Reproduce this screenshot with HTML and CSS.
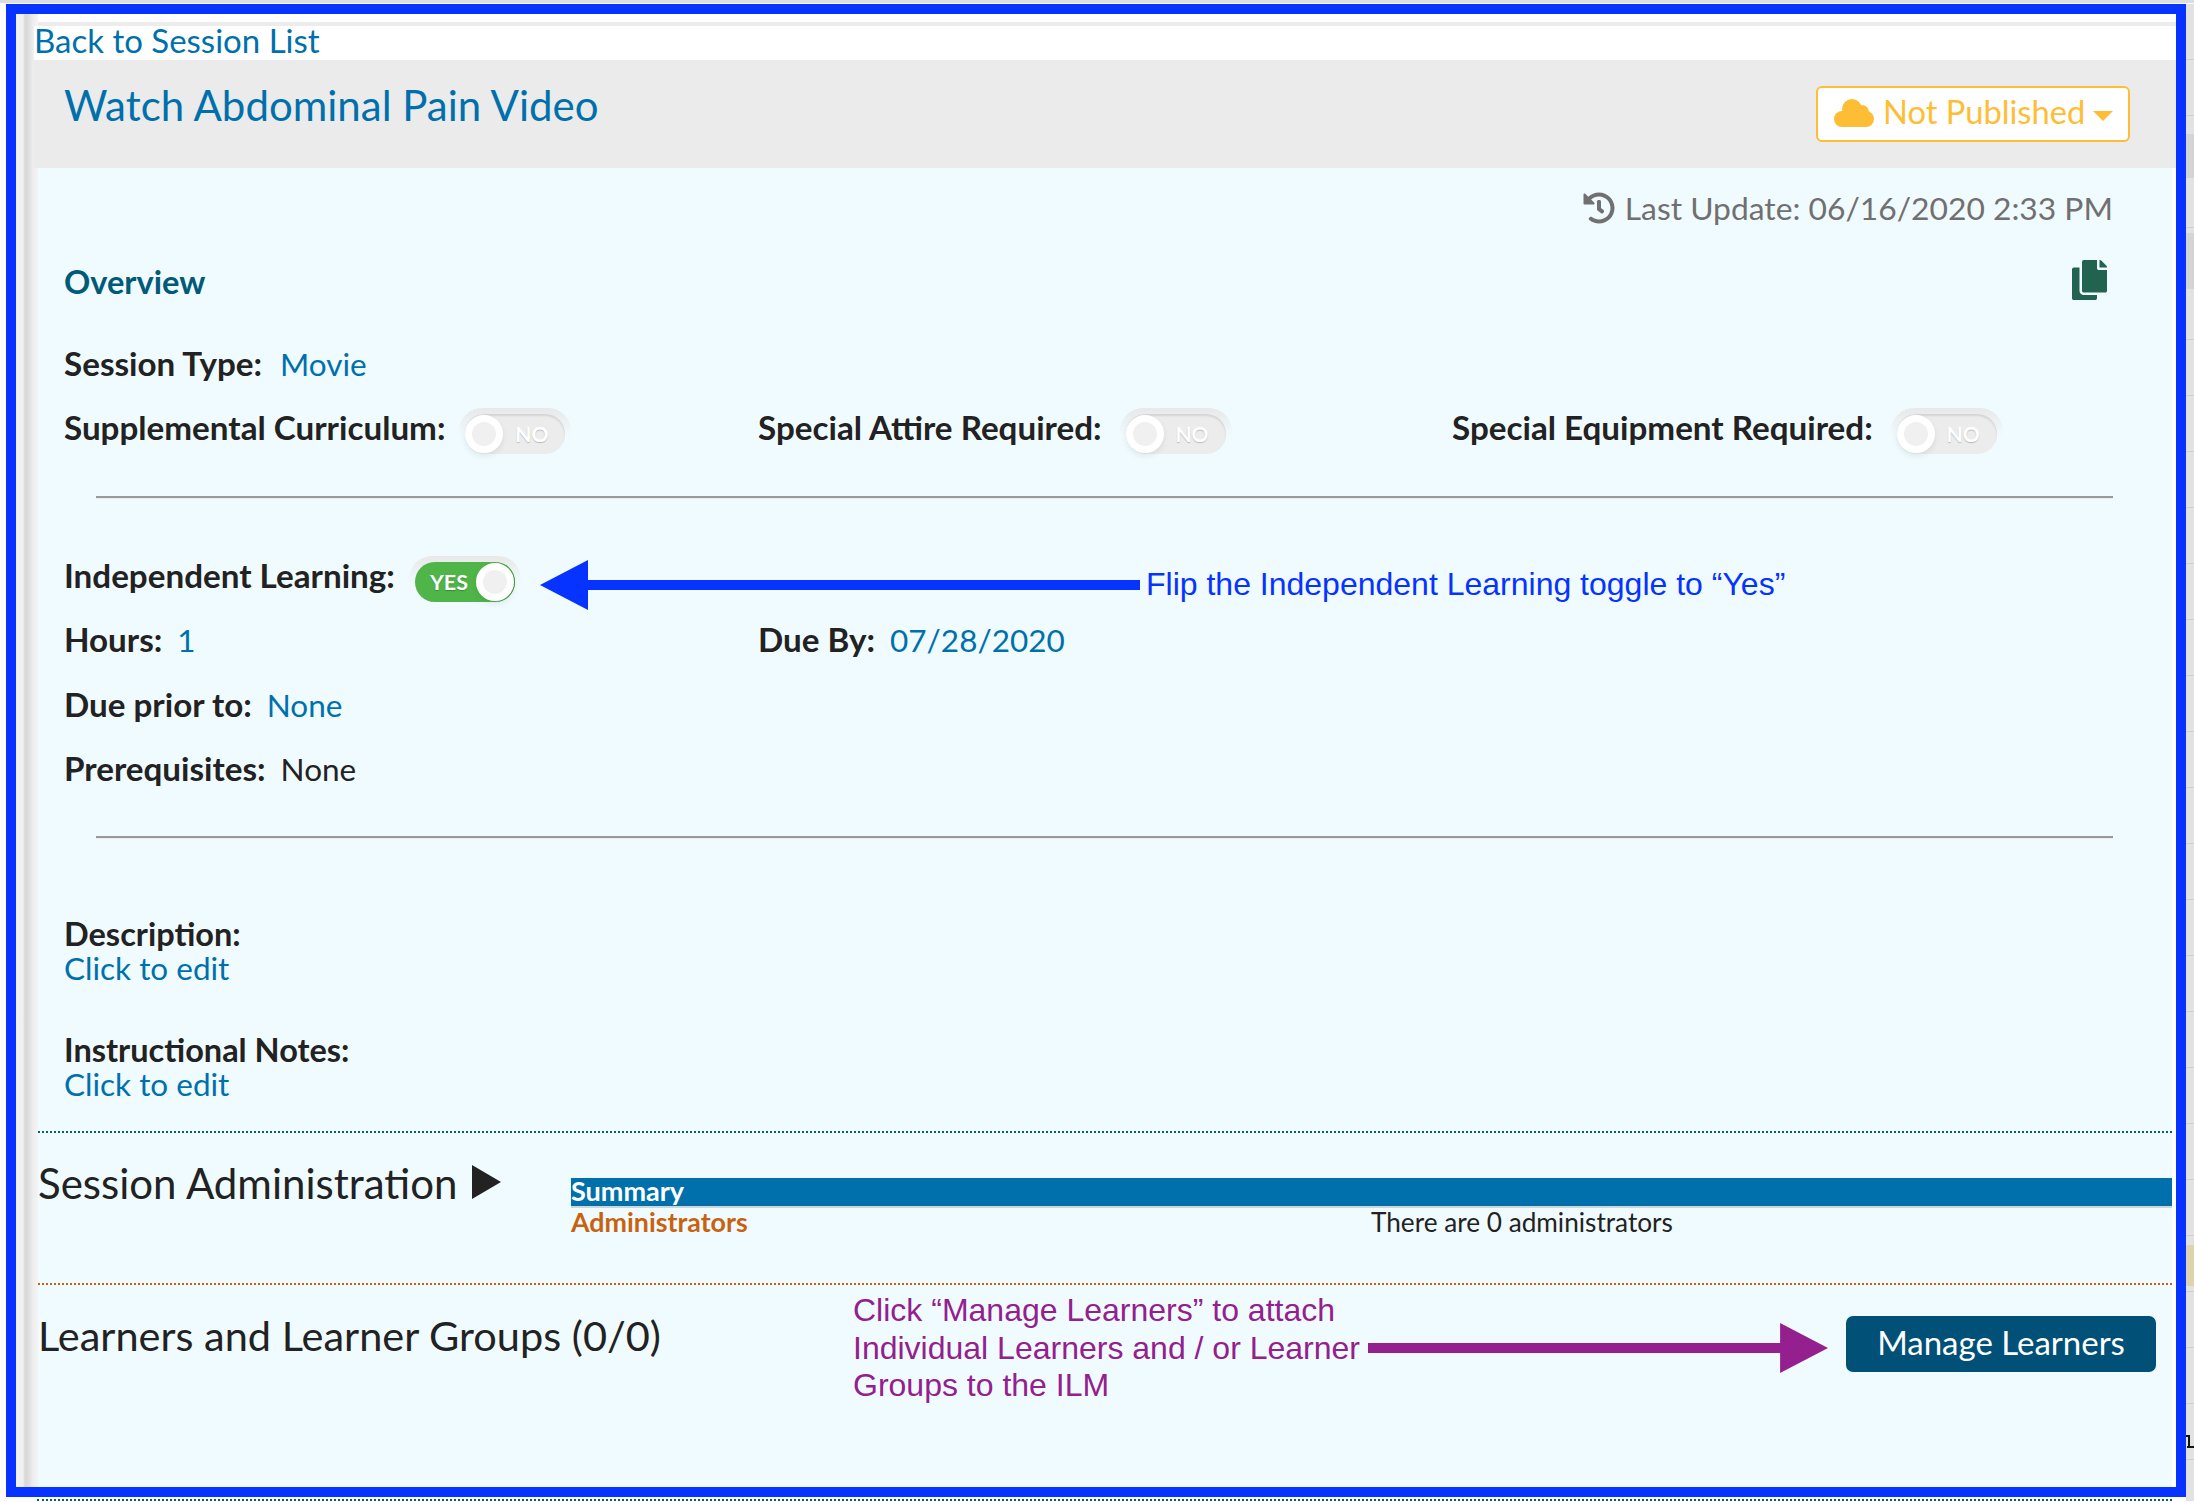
FILE: index.html
```html
<!DOCTYPE html>
<html lang="en">
<head>
<meta charset="UTF-8" />
<title>Watch Abdominal Pain Video</title>
<link rel="stylesheet" href="styles.css">
</head>
<body>
  <div class="frame">
    <div class="top-strip"></div>
    <div class="shell">
      <div class="back"><a href="#">Back to Session List</a></div>

      <div class="head">
        <h1>Watch Abdominal Pain Video</h1>
        <button class="publish">
          <svg class="cloud" viewBox="0 0 40 28"><circle cx="8" cy="20" r="8"/><circle cx="18" cy="10" r="10"/><circle cx="28" cy="13" r="7"/><circle cx="32" cy="20" r="8"/><rect x="8" y="14" width="24" height="14"/></svg>
          <span>Not Published</span>
          <i class="caret"></i>
        </button>
      </div>

      <div class="content">
        <div class="overview">
          <div class="update">
            <svg class="history" viewBox="0 0 512 512"><path d="M504 255.531c.253 136.64-111.18 248.372-247.82 248.468-59.015.042-113.223-20.53-155.822-54.911-11.077-8.94-11.905-25.541-1.839-35.607l11.267-11.267c8.609-8.609 22.353-9.551 31.891-1.984C173.062 425.135 212.781 440 256 440c101.705 0 184-82.311 184-184 0-101.705-82.311-184-184-184-48.814 0-93.149 18.969-126.068 49.932l50.754 50.754c10.08 10.08 2.941 27.314-11.313 27.314H24c-8.837 0-16-7.163-16-16V38.627c0-14.254 17.234-21.393 27.314-11.314l49.372 49.372C129.209 34.136 189.552 8 256 8c136.81 0 247.747 110.78 248 247.531zm-180.912 78.784l9.823-12.63c8.138-10.463 6.253-25.542-4.21-33.679L288 256.349V152c0-13.255-10.745-24-24-24h-16c-13.255 0-24 10.745-24 24v135.651l65.409 50.874c10.463 8.137 25.541 6.253 33.679-4.21z"/></svg>
            <span>Last Update: 06/16/2020 2:33 PM</span>
          </div>

          <div class="overview-title">
            <h2>Overview</h2>
            <svg class="copy" viewBox="0 0 448 512"><path d="M320 448v40c0 13.255-10.745 24-24 24H24c-13.255 0-24-10.745-24-24V120c0-13.255 10.745-24 24-24h72v296c0 30.879 25.121 56 56 56h168zm0-344V0H152c-13.255 0-24 10.745-24 24v368c0 13.255 10.745 24 24 24h272c13.255 0 24-10.745 24-24V128H344c-13.2 0-24-10.8-24-24zm120.971-31.029L375.029 7.029A24 24 0 0 0 358.059 0H352v96h96v-6.059a24 24 0 0 0-7.029-16.97z"/></svg>
          </div>

          <div class="row row-type"><b>Session Type:</b><a href="#">Movie</a></div>

          <div class="cols row-flags">
            <div class="row"><b>Supplemental Curriculum:</b>
              <div class="toggle toggle-near"><div class="track"><i class="knob"></i><em>NO</em></div></div>
            </div>
            <div class="row"><b>Special Attire Required:</b>
              <div class="toggle"><div class="track"><i class="knob"></i><em>NO</em></div></div>
            </div>
            <div class="row"><b>Special Equipment Required:</b>
              <div class="toggle"><div class="track"><i class="knob"></i><em>NO</em></div></div>
            </div>
          </div>

          <hr class="rule rule-a">

          <div class="row row-ind"><b>Independent Learning:</b>
            <div class="toggle toggle-near"><div class="track on"><em>YES</em><i class="knob"></i></div></div>
          </div>

          <div class="cols row-hours">
            <div class="row"><b>Hours:</b><a href="#">1</a></div>
            <div class="row"><b>Due By:</b><a href="#">07/28/2020</a></div>
          </div>

          <div class="row row-prior"><b>Due prior to:</b><a href="#">None</a></div>
          <div class="row row-pre"><b>Prerequisites:</b><span>None</span></div>

          <hr class="rule rule-b">

          <div class="stack stack-desc"><b>Description:</b><a href="#">Click to edit</a></div>
          <div class="stack stack-notes"><b>Instructional Notes:</b><a href="#">Click to edit</a></div>
        </div>

        <div class="admin">
          <h3>Session Administration <i class="play"></i></h3>
          <div class="summary">
            <div class="summary-bar">Summary</div>
            <div class="summary-row"><b>Administrators</b><span>There are 0 administrators</span></div>
          </div>
        </div>

        <div class="learners">
          <h3>Learners and Learner Groups (0/0)</h3>
          <button class="manage">Manage Learners</button>
        </div>
      </div>
    </div>
  </div>
  <div class="end-line"></div>

  <!-- notes drawn over the screenshot -->
  <svg class="arrow arrow-blue" viewBox="0 0 600 50"><polygon points="0,25 48,0 48,20 600,20 600,30 48,30 48,50"/></svg>
  <p class="note note-blue">Flip the Independent Learning toggle to “Yes”</p>
  <p class="note note-purple">Click “Manage Learners” to attach<br>Individual Learners and / or Learner<br>Groups to the ILM</p>
  <svg class="arrow arrow-purple" viewBox="0 0 461 50"><polygon points="0,20 413,20 413,0 461,25 413,50 413,30 0,30"/></svg>

  <!-- strip of the page behind, cut off by the frame -->
  <div class="side"><i class="side-band side-a"></i><i class="side-band side-b"></i><i class="side-band side-c"></i></div>
  <svg class="edge-mark" viewBox="0 0 8 14"><path d="M0 1h4v11h4v2H1v-2h1V3H0z"/></svg>
</body>
</html>
```

FILE: styles.css
```css
* {
  box-sizing: border-box;
}
body {
  margin: 0;
  position: relative;
  height: 1502px;
  overflow: hidden;
  background: #fdfdfd;
  border-top: 3px solid #dcdce6;
  padding-top: 1px;
  font-family: 'Lato', sans-serif;
  font-size: 31.5px;
  line-height: 40px;
  color: #222;
}
a {
  color: #0070ad;
  text-decoration: none;
}
b {
  font-weight: 700;
  font-size: 33.2px;
}
h1, h2, h3, p {
  margin: 0;
  font-weight: 400;
}

/* Blue frame */
.frame {
  margin-left: 6px;
  width: 2180px;
  height: 1493px;
  border: 10px solid #0633ff;
  display: flex;
  flex-direction: column;
  background: #fff linear-gradient(90deg, #f2f2f2, #f0f0f0 7px, #d8d8d8 9px, #dcdcdc 12px, #eee 17px, #f4f4f4 22px) no-repeat;
  background-size: 22px 100%;
}
.top-strip {
  height: 12px;
  margin-left: 22px;
  background: #fff;
  border-bottom: 4px solid #ececec;
}
.shell {
  flex: 1;
  padding-left: 18px;
  display: flex;
  flex-direction: column;
}
.end-line {
  margin: 2px 0 0 37px;
  width: 2135px;
  border-top: 2px dotted #00607f;
}

/* Header */
.back {
  height: 34px;
  background: #fff;
  line-height: 28px;
  font-size: 33px;
}
.head {
  height: 108px;
  background: #ebebeb;
  padding: 23px 46px 0 30px;
  display: flex;
  justify-content: space-between;
  align-items: flex-start;
}
h1 {
  font-size: 42px;
  line-height: 44px;
  color: #0070ad;
}
.publish {
  width: 314px;
  height: 56px;
  background: #fff;
  border: 2px solid #fdbe36;
  border-radius: 6px;
  font: inherit;
  font-size: 32.7px;
  color: #fdbe36;
  display: flex;
  align-items: center;
  padding: 0 16px 5px;
  margin-top: 3px;
  white-space: nowrap;
}
.cloud {
  flex: none;
  width: 40px;
  height: 28px;
  fill: #fdbe36;
  margin: 3px 9px 0 0;
}
.caret {
  margin: 8px 0 0 8px;
  border-left: 10px solid transparent;
  border-right: 10px solid transparent;
  border-top: 10px solid #fdbe36;
}

/* Overview */
.content {
  flex: 1;
  margin-left: 4px;
  border-right: 4px solid #fff;
  background: #f0fbff;
  display: flex;
  flex-direction: column;
}
.overview {
  padding: 20px 59px 0 26px;
}
.update {
  height: 40px;
  display: flex;
  justify-content: flex-end;
  align-items: center;
  gap: 10px;
  color: #707070;
  font-size: 31.8px;
}
.history {
  width: 32px;
  height: 32px;
  fill: #707070;
}
.overview-title {
  margin-top: 34px;
  height: 40px;
  display: flex;
  justify-content: space-between;
  align-items: flex-start;
}
h2 {
  font-size: 32.6px;
  font-weight: 700;
  color: #005a78;
}
.copy {
  width: 35px;
  height: 40px;
  fill: #22634f;
  margin: -2px 6px 0 0;
}
.row {
  display: flex;
  align-items: baseline;
  height: 40px;
}
.row b {
  margin-right: 15px;
}
.row-type b {
  margin-right: 18px;
}
.cols {
  display: grid;
  grid-template-columns: 694px 694px 1fr;
}
.row-type { margin-top: 41px; }
.row-flags { margin-top: 24px; }
.row-ind { margin-top: 56px; }
.row-hours { margin-top: 24px; }
.row-prior { margin-top: 25px; }
.row-pre { margin-top: 24px; }

.rule {
  margin: 0 0 0 32px;
  border: 0;
  height: 3px;
  border-top: 2px solid #999;
  border-bottom: 1px solid #e8eef0;
}
.rule-a { margin-top: 49px; }
.rule-b { margin-top: 48px; }

.stack {
  display: flex;
  flex-direction: column;
  line-height: 34px;
}
.stack b {
  font-size: 32.5px;
}
.stack-desc { margin-top: 78px; }
.stack-notes { margin-top: 48px; }

/* Toggles */
.toggle {
  align-self: flex-start;
  width: 112px;
  height: 46px;
  margin: 1px 0 0 3px;
  padding: 6px 6px 0;
  border-radius: 23px 23px 0 0;
  background: linear-gradient(#e8e8e8, rgba(232, 232, 232, 0) 60%);
}
.toggle-near {
  margin-left: -1px;
}
.track {
  width: 100px;
  height: 40px;
  border-radius: 20px;
  background: #ececec;
  box-shadow: inset 0 2px 2px #d4d4d4;
  display: flex;
  align-items: center;
  justify-content: space-between;
  padding-right: 17px;
}
.track em {
  font-style: normal;
  font-weight: 700;
  font-size: 21px;
  line-height: 20px;
  color: #fff;
  text-shadow: 0 1px 1px #bbb;
}
.knob {
  width: 38px;
  height: 38px;
  border-radius: 50%;
  border: 7px solid #fff;
  background: #f0f0f0;
  box-shadow: 0 3px 6px rgba(0, 0, 0, 0.08);
}
.track.on {
  background: #4fb548;
  box-shadow: inset -1px 0 0 #439e3c;
  padding: 0 1px 0 15px;
}
.track.on em {
  font-size: 21.5px;
  text-shadow: 0 1px 1px #3a8a34;
}

/* Session administration */
.admin {
  margin-top: 30px;
  height: 152px;
  border-top: 2px dotted #00607f;
  display: flex;
}
h3 {
  font-size: 41.5px;
  line-height: 48px;
}
.admin h3 {
  width: 533px;
  padding-top: 26px;
  font-size: 42px;
  display: flex;
  align-items: flex-start;
}
.play {
  margin: 6px 0 0 15px;
  border-left: 29px solid #222;
  border-top: 17px solid transparent;
  border-bottom: 17px solid transparent;
}
.summary {
  flex: 1;
  padding-top: 45px;
}
.summary-bar {
  height: 30px;
  background: #0070ad;
  border-bottom: 2px solid #cfd6da;
  color: #fff;
  font-weight: 700;
  font-size: 27px;
  line-height: 26px;
}
.summary-row {
  display: grid;
  grid-template-columns: 800px 1fr;
  font-size: 26.2px;
  line-height: 28px;
}
.summary-row b {
  font-size: 26.8px;
  color: #c8620f;
}
.learners {
  border-top: 2px dotted #c8620f;
  display: flex;
  justify-content: space-between;
  align-items: flex-start;
  padding: 26px 16px 0 0;
}
.manage {
  width: 310px;
  height: 56px;
  padding: 0 0 4px;
  background: #005078;
  color: #fff;
  border: 0;
  border-radius: 7px;
  font: inherit;
  font-size: 33px;
  margin-top: 5px;
}

/* Annotations */
.arrow {
  position: absolute;
}
.arrow-blue {
  left: 540px;
  top: 557px;
  width: 600px;
  height: 50px;
  fill: #0633ff;
}
.arrow-purple {
  left: 1368px;
  top: 1320px;
  width: 460px;
  height: 50px;
  fill: #93208e;
}
.note {
  position: absolute;
  font-family: 'Liberation Sans', sans-serif;
}
.note-blue {
  left: 1146px;
  top: 561px;
  font-size: 32px;
  color: #0633ff;
}
.note-purple {
  left: 853px;
  top: 1289px;
  font-size: 32px;
  line-height: 37.5px;
  color: #93208e;
}

/* Right edge */
.side {
  position: absolute;
  left: 2186px;
  top: 1px;
  width: 8px;
  height: 1497px;
  background: repeating-linear-gradient(#e2e2e2 0, #e2e2e2 55px, #cfcfcf 55px, #cfcfcf 56px);
}
.side-band {
  position: absolute;
  left: 0;
  width: 8px;
  background: #d4d4d4;
}
.side-a { top: 130px; height: 44px; }
.side-b { top: 229px; height: 56px; }
.side-c { top: 1241px; height: 41px; background: #dfd3ad; }
.edge-mark {
  position: absolute;
  left: 2186px;
  top: 1431px;
  width: 8px;
  height: 14px;
  fill: #111;
}
```
